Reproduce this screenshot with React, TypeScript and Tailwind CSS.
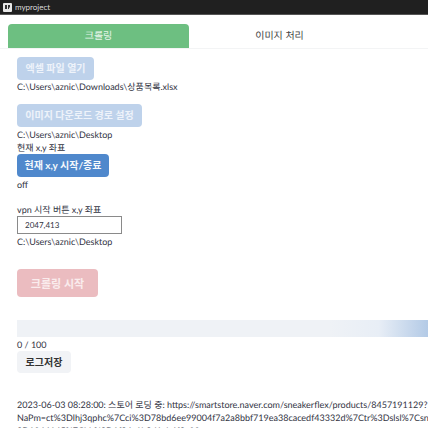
import React from 'react';

const font = "font-['Lato','Noto_Sans_CJK_KR',sans-serif]";

const App: React.FC = () => {
  return (
    <div className={`h-[428px] w-[428px] overflow-hidden bg-white text-[9px] leading-[13px] text-[#31333f] [text-rendering:geometricPrecision] ${font}`}>
      {/* Title bar */}
      <div className="flex h-[15px] items-center gap-[3px] border-b border-[#555] bg-[#202020] pl-[3px]">
        <svg className="h-[9px] w-[9px]" viewBox="0 0 9 9">
          <rect width="9" height="9" rx="1" fill="#e8e8e8" />
          <path d="M2 2h2v4H2zM5 2h2v2.5H6V6H5z" fill="#333" />
        </svg>
        <span className="text-[8px] text-[#d8d8d8]">myproject</span>
      </div>

      {/* Tabs */}
      <div className="mt-[9px] flex h-[25px] border-b border-[#f3f4f5] pl-2">
        <div className="flex w-[181px] items-center justify-center rounded-t-[4px] bg-[#6dbf81] text-[10px] text-[#e6f5ea]">크롤링</div>
        <div className="flex w-[181px] items-center justify-center text-[10px] text-[#444]">이미지 처리</div>
      </div>

      <main className="pl-[17px]">
        <button className="mt-2 block h-[23px] w-[77px] rounded-[4px] bg-[#bed2eb] text-[10px] font-bold text-[#eef3fa]">엑셀 파일 열기</button>
        <p>C:\Users\aznic\Downloads\상품목록.xlsx</p>

        <button className="mt-[11px] block h-[23px] w-[125px] rounded-[4px] bg-[#bed2eb] text-[10px] font-bold text-[#eef3fa]">이미지 다운로드 경로 설정</button>
        <p className="mt-[1px]">C:\Users\aznic\Desktop</p>
        <p>현재 x,y 좌표</p>
        <button className="block h-[23px] w-[92px] rounded-[4px] bg-[#4f88cc] text-[10px] font-bold text-[#f4f8fc]">현재 x,y 시작/종료</button>
        <p className="mt-[1px]">off</p>

        <p className="mt-[12px]">vpn 시작 버튼 x,y 좌표</p>
        <input
          readOnly
          value="2047,413"
          className="block h-[18px] w-[105px] border border-[#8a8a8a] pl-[7px] text-[8px] text-[#31333f] outline-none"
        />
        <p className="mt-[1px]">C:\Users\aznic\Desktop</p>

        <button className="mt-[21px] block h-[28px] w-[81px] rounded-[4px] bg-[#ebbcc0] text-[11px] font-bold text-[#faeced]">크롤링 시작</button>

        {/* Progress */}
        <div className="mt-[23px] h-[17px] bg-[linear-gradient(90deg,#eff2f6_0%,#eff2f6_76%,#e8eef6_88%,#b3cae6_100%)]"></div>
        <p className="mt-[1px]">0 / 100</p>
        <button className="block h-[22px] w-[54px] rounded-[4px] bg-[#f1f3f6] text-[10px] font-bold text-[#333]">로그저장</button>

        {/* Log */}
        <div className="mt-[25px] whitespace-nowrap">
          <p>2023-06-03 08:28:00: 스토어 로딩 중: https://smartstore.naver.com/sneakerflex/products/8457191129?</p>
          <p>NaPm=ct%3Dlhj3qphc%7Cci%3D78bd6ee99004f7a2a8bbf719ea38cacedf43332d%7Ctr%3Dslsl%7Csn%</p>
          <p>3D1044145%7Chk%3D1f34c1b8d1ab4f3a90</p>
        </div>
      </main>
    </div>
  );
};

export default App;
